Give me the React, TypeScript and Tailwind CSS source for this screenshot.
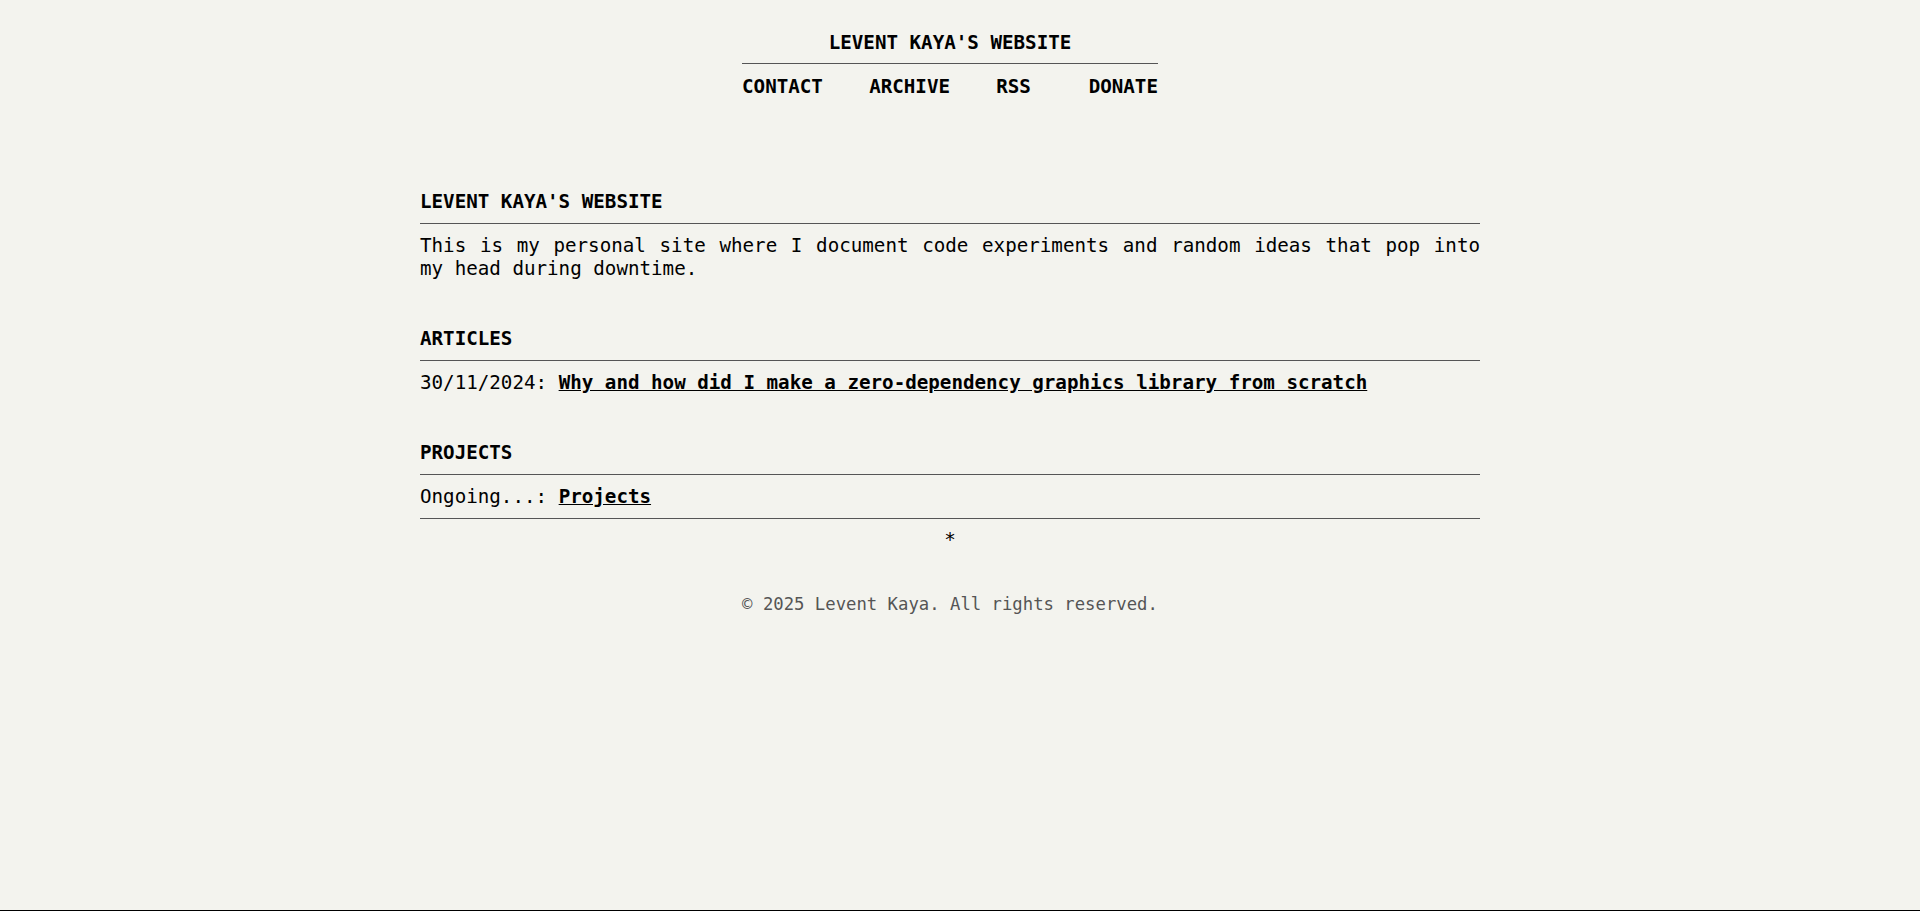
import React from "react";

export default function App() {
  return (
    <div className="h-[911px] box-border border-b border-black bg-[#f3f3ee] text-black font-['DejaVu_Sans_Mono','Liberation_Mono',monospace] text-[19.2px] leading-[normal] overflow-hidden">
      <div className="pr-[20px] flex flex-col items-center">
        <header className="pt-[31px] flex flex-col items-stretch">
          <h1 className="font-bold text-center pb-[9px] border-b border-[#555]">LEVENT KAYA'S WEBSITE</h1>
          <nav className="pt-[11px] font-bold flex">
            <a href="#">CONTACT</a>
            <a href="#" className="ml-[4ch]">ARCHIVE</a>
            <a href="#" className="ml-[4ch]">RSS</a>
            <a href="#" className="ml-[5ch]">DONATE</a>
          </nav>
        </header>

        <main className="w-[1060px] mt-[92px]">
          <section>
            <h2 className="font-bold pb-[10px] border-b border-[#555]">LEVENT KAYA'S WEBSITE</h2>
            <p className="pt-[10px] text-justify">
              This is my personal site where I document code experiments and random ideas that pop into my head during downtime.
            </p>
          </section>

          <section className="mt-[47px]">
            <h2 className="font-bold pb-[10px] border-b border-[#555]">ARTICLES</h2>
            <p className="pt-[10px]">
              30/11/2024: <a href="#" className="font-bold underline">Why and how did I make a zero-dependency graphics library from scratch</a>
            </p>
          </section>

          <section className="mt-[47px]">
            <h2 className="font-bold pb-[10px] border-b border-[#555]">PROJECTS</h2>
            <p className="pt-[10px] pb-[10px] border-b border-[#555]">
              Ongoing...: <a href="#" className="font-bold underline">Projects</a>
            </p>
          </section>

          <div className="pt-[9px] text-center">*</div>
        </main>

        <footer className="mt-[43px] text-[17.28px] text-[#555] text-center">
          © 2025 Levent Kaya. All rights reserved.
        </footer>
      </div>
    </div>
  );
}
